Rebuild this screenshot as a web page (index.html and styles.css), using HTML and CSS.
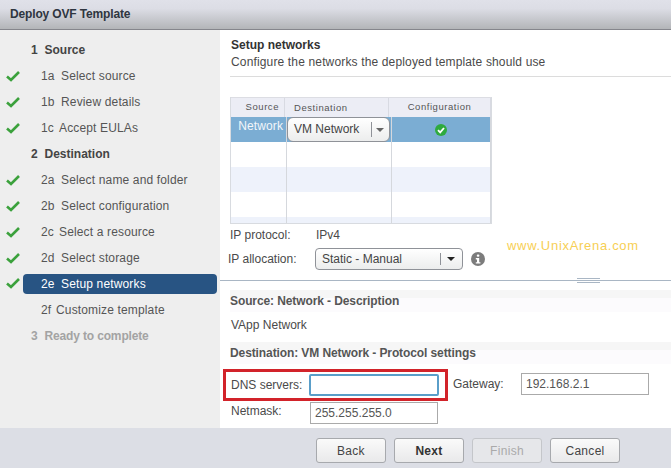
FILE: index.html
```html
<!DOCTYPE html>
<html lang="en">
<head>
<meta charset="utf-8">
<title>Deploy OVF Template</title>
<link rel="stylesheet" href="styles.css">
</head>
<body>
<div class="dialog">
  <header class="titlebar">Deploy OVF Template</header>
  <div class="main">
    <nav class="steps">
      <div class="step head"><span class="num">1</span>Source</div>
      <div class="step sub"><svg class="tick" viewBox="0 0 14 12"><path d="M1 6.5l4 3.5L13 2"/></svg><span class="num">1a</span>Select source</div>
      <div class="step sub"><svg class="tick" viewBox="0 0 14 12"><path d="M1 6.5l4 3.5L13 2"/></svg><span class="num">1b</span>Review details</div>
      <div class="step sub"><svg class="tick" viewBox="0 0 14 12"><path d="M1 6.5l4 3.5L13 2"/></svg><span class="num narrow">1c</span>Accept EULAs</div>
      <div class="step head"><span class="num">2</span>Destination</div>
      <div class="step sub"><svg class="tick" viewBox="0 0 14 12"><path d="M1 6.5l4 3.5L13 2"/></svg><span class="num">2a</span>Select name and folder</div>
      <div class="step sub"><svg class="tick" viewBox="0 0 14 12"><path d="M1 6.5l4 3.5L13 2"/></svg><span class="num">2b</span>Select configuration</div>
      <div class="step sub"><svg class="tick" viewBox="0 0 14 12"><path d="M1 6.5l4 3.5L13 2"/></svg><span class="num narrow">2c</span>Select a resource</div>
      <div class="step sub"><svg class="tick" viewBox="0 0 14 12"><path d="M1 6.5l4 3.5L13 2"/></svg><span class="num">2d</span>Select storage</div>
      <div class="step sub active"><svg class="tick" viewBox="0 0 14 12"><path d="M1 6.5l4 3.5L13 2"/></svg><span class="num">2e</span>Setup networks</div>
      <div class="step sub"><span class="num tiny">2f</span>Customize template</div>
      <div class="step head off"><span class="num">3</span>Ready to complete</div>
    </nav>
    <section class="content">
      <div class="intro">
        <h1>Setup networks</h1>
        <p>Configure the networks the deployed template should use</p>
      </div>
      <div class="grid">
        <div class="ghead-row">
          <div class="ghead src">Source</div>
          <div class="ghead dst">Destination</div>
          <div class="ghead cfg">Configuration</div>
        </div>
        <div class="gcell sel srcv">Network</div>
        <div class="gcell sel"><div class="combo combo-net"><span class="combo-text">VM Network</span><span class="combo-btn"><i class="caret"></i></span></div></div>
        <div class="gcell sel center"><svg class="okicon" viewBox="0 0 14 14"><circle cx="7" cy="7" r="6" /><path d="M4 7.2l2.2 2.2L10 5"/></svg></div>
        <div class="gcell"></div><div class="gcell"></div><div class="gcell"></div>
        <div class="gcell alt"></div><div class="gcell alt"></div><div class="gcell alt"></div>
        <div class="gcell"></div><div class="gcell"></div><div class="gcell"></div>
        <div class="gcell alt"></div><div class="gcell alt"></div><div class="gcell alt"></div>
      </div>
      <div class="proto"><span class="proto-label">IP protocol:</span><span>IPv4</span></div>
      <div class="alloc">
        <span class="alloc-label">IP allocation:</span>
        <div class="combo combo-alloc"><span class="combo-text">Static - Manual</span><span class="combo-btn"><i class="caret dark"></i></span></div>
        <svg class="info" viewBox="0 0 14 14"><circle cx="7" cy="7" r="7"/><rect x="5.8" y="2.4" width="2.6" height="2.4" rx="1"/><path d="M4.8 6h3.4v4.2h1.2v1.4H4.8v-1.4H6V7.4H4.8z"/></svg>
        <span class="watermark">www.UnixArena.com</span>
      </div>
      <div class="splitter"><span class="grip"></span></div>
      <div class="band first">Source: Network - Description</div>
      <div class="plain">VApp Network</div>
      <div class="band">Destination: VM Network - Protocol settings</div>
      <div class="form">
        <div class="dns">
          <label>DNS servers:</label>
          <div class="input focus"></div>
        </div>
        <label class="gw-label">Gateway:</label>
        <div class="input gw">192.168.2.1</div>
        <label class="mask-label">Netmask:</label>
        <div class="input mask">255.255.255.0</div>
      </div>
    </section>
  </div>
  <footer class="actions">
    <button class="btn">Back</button>
    <button class="btn primary">Next</button>
    <button class="btn disabled">Finish</button>
    <button class="btn">Cancel</button>
  </footer>
</div>
</body>
</html>
```
FILE: styles.css
```css
* { box-sizing: border-box; }
html, body { margin: 0; padding: 0; }
body { width: 671px; height: 468px; overflow: hidden; background: #fff; font-family: "Liberation Sans", Arial, sans-serif; font-size: 12px; color: #4a4a4a; }
.dialog { width: 671px; height: 468px; display: flex; flex-direction: column; }
.titlebar { height: 30px; padding: 6px 0 0 10px; flex: none; font-size: 12px; font-weight: bold; color: #2f3640; line-height: 16px; letter-spacing: -0.15px; background: linear-gradient(#e0e1e9, #dcdde5 30%, #b3b5b8); border-bottom: 1px solid #85868c; }
.main { flex: 1; display: flex; min-height: 0; }
.steps { width: 220px; flex: none; background: #eeeeee; padding-top: 7px; }
.step { height: 26px; line-height: 26px; position: relative; display: flex; letter-spacing: 0.15px; }
.step.head { padding-left: 31px; font-weight: bold; color: #444; letter-spacing: 0; }
.step.head .num { width: 13.5px; }
.step.head.off { color: #a3a3a3; letter-spacing: -0.15px; }
.step.sub { padding-left: 41px; color: #555; }
.step.sub .num { width: 20px; }
.step.sub .num.narrow { width: 18px; }
.step.sub .num.tiny { width: 15px; }
.step.active { margin: 0 3px 0 23px; padding-left: 18px; height: 20px; line-height: 20px; top: 3px; margin-bottom: 6px; background: #285483; border-radius: 4px; color: #fff; }
.tick { position: absolute; left: 6px; top: 7px; width: 14px; height: 12px; fill: none; stroke: #3ba13c; stroke-width: 2.6; }
.step.active .tick { left: -17px; top: 3px; }
.content { flex: 1; min-width: 0; display: flex; flex-direction: column; background: #fff; }
.intro { margin: 0 0 20px 10px; padding: 8px 0 0 1px; height: 47px; flex: none; border-bottom: 1px solid #dcdcdc; }
.intro h1 { margin: 0; font-size: 12px; font-weight: bold; color: #333; line-height: 14px; }
.intro p { margin: 3px 0 0; font-size: 12px; color: #4a4a4a; line-height: 15px; letter-spacing: 0.15px; }
.grid { margin-left: 10px; width: 262px; height: 127px; flex: none; display: grid; grid-template-columns: 56px 105px 99px; grid-template-rows: 20px 25px 25px 25px 25px 6px; border: 1px solid #d8dbe0; border-top: 0; overflow: hidden; }
.ghead-row { grid-column: 1 / -1; display: grid; grid-template-columns: 54px 104px 102px; background: #ecedf5; border-top: 1px solid #dcdde3; }
.ghead { color: #555; font-size: 9.5px; letter-spacing: 0.55px; text-align: center; line-height: 18px; border-right: 1px solid #d8dae2; }
.ghead.src { text-align: right; padding-right: 5px; }
.ghead.dst { text-align: left; padding-left: 9px; line-height: 20px; }
.gcell { border-right: 1px solid #d5d8dd; background: #fff; min-height: 0; }
.gcell.alt { background: #eef2fb; }
.gcell.sel { background: #7badd3; display: flex; align-items: center; padding: 0; }
.gcell.srcv { color: #f2f6fa; justify-content: flex-end; font-size: 12px; padding: 0 3px 8px 0; letter-spacing: 0.1px; }
.gcell.center { justify-content: center; }
.combo { display: flex; align-items: stretch; border: 1px solid #8f9298; background: linear-gradient(#fff, #eceded); color: #444; }
.combo-text { flex: 1; white-space: nowrap; }
.combo-btn { display: flex; align-items: center; justify-content: center; }
.combo-net { width: 103px; height: 25px; border-radius: 6px; line-height: 22px; }
.combo-net .combo-text { padding-left: 6px; }
.combo-net .combo-btn { width: 18px; position: relative; }
.combo-net .combo-btn::before, .combo-alloc .combo-btn::before { content: ""; position: absolute; left: 0; top: 4px; bottom: 4px; width: 1px; background: #8f9298; }
.caret { width: 0; height: 0; border-left: 4px solid transparent; border-right: 4px solid transparent; border-top: 4px solid #666; }
.caret.dark { border-top-color: #222; }
.okicon { width: 14px; height: 14px; fill: #2faa3e; stroke: none; }
.okicon path { fill: none; stroke: #fff; stroke-width: 1.8; }
.proto { height: 22px; padding: 3px 0 0 10px; display: flex; line-height: 16px; flex: none; }
.proto-label { width: 86px; }
.alloc { height: 26px; padding-left: 8px; display: flex; align-items: center; position: relative; flex: none; }
.alloc-label { width: 87px; flex: none; }
.combo-alloc { width: 148px; height: 22px; border-radius: 4px; line-height: 20px; }
.combo-alloc .combo-text { padding-left: 6px; }
.combo-alloc .combo-btn { width: 22px; position: relative; }
.info { width: 14px; height: 14px; margin-left: 8px; fill: #7c7c7c; }
.info rect, .info path { fill: #fff; }
.watermark { position: absolute; left: 287px; top: -8px; color: #f7cf54; font-size: 13px; letter-spacing: 0.7px; white-space: nowrap; }
.splitter { height: 1px; margin-top: 8px; background: #a9b6c4; position: relative; flex: none; }
.grip { position: absolute; left: 357px; top: -2px; width: 23px; height: 5px; border-top: 1px solid #a9b6c4; border-bottom: 1px solid #a9b6c4; }
.band { margin-left: 10px; height: 22px; line-height: 22px; font-weight: bold; color: #555; flex: none; letter-spacing: -0.1px; background: linear-gradient(#f6f6f6 8px, #fcfbfd 8px); }
.band.first { margin-top: 9px; }
.plain { padding: 5px 0 0 11px; height: 30px; line-height: 16px; flex: none; }
.form { margin-top: 5px; position: relative; flex: 1; }
.input { border: 1px solid #aaa; background: #fff; height: 22px; line-height: 20px; padding-left: 4px; color: #555; }
.dns { position: absolute; left: 3px; top: 0; width: 225px; height: 32px; border: 3px solid #d2232a; display: flex; align-items: center; padding: 0 0 0 5px; }
.dns label { width: 78px; flex: none; }
.input.focus { width: 130px; height: 22px; border: 2px solid #5a9ec9; border-radius: 2px; flex: none; }
.gw-label { position: absolute; left: 233px; top: 8px; }
.input.gw { position: absolute; left: 301px; top: 4px; width: 128px; }
.mask-label { position: absolute; left: 11px; top: 35px; }
.input.mask { position: absolute; left: 90px; top: 33px; width: 128px; }
.actions { height: 40px; flex: none; background: #dcdee5; display: flex; align-items: flex-start; gap: 8px; padding: 10px 0 0 316px; }
.btn { width: 70px; height: 25px; padding: 0; border: 1px solid #a7a9ad; border-radius: 3px; background: linear-gradient(#fafafa, #e9e9ea); font: 12px "Liberation Sans", Arial, sans-serif; color: #444; letter-spacing: 0.3px; }
.btn.primary { font-weight: bold; color: #333; }
.btn.disabled { color: #aaa; border-color: #c4c6ca; background: #e6e7ea; }
```
